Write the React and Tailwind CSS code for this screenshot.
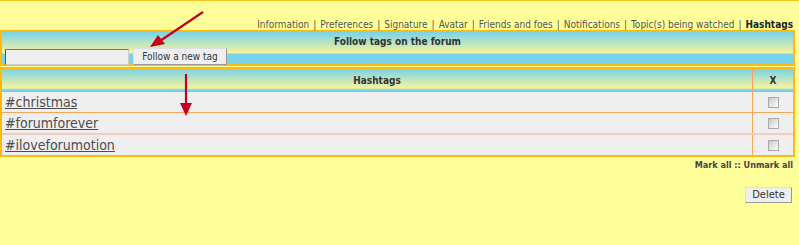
import React from 'react';

const navLinks = [
  'Information',
  'Preferences',
  'Signature',
  'Avatar',
  'Friends and foes',
  'Notifications',
  'Topic(s) being watched',
];

const tags = ['#christmas', '#forumforever', '#iloveforumotion'];

const font = { fontFamily: '"DejaVu Sans Condensed", "DejaVu Sans", Verdana, sans-serif' };

const Box = () => (
  <input
    type="checkbox"
    className="appearance-none block w-[11px] h-[11px] border border-[#a9a9a9] bg-[linear-gradient(135deg,#c8c8c8,#ffffff)]"
  />
);

const App = () => {
  return (
    <div className="relative w-[799px] h-[245px] bg-[#ffff99] border-t border-[#ffc21a] overflow-hidden" style={font}>
      {/* tab links */}
      <div className="flex justify-end items-start h-[29px] pt-[18px] pr-[6px] text-[10px] leading-[12px] text-[#555]">
        {navLinks.map((l) => (
          <span key={l}>
            {l}
            <span className="mx-[4px]">|</span>
          </span>
        ))}
        <span className="font-bold text-[#222]">Hashtags</span>
      </div>

      {/* follow panel */}
      <div className="w-[795px] border-2 border-[#ffb90f] h-[36px] bg-[linear-gradient(to_bottom,#78d3ea_0px,#f7f39b_21px,#78d3ea_22px)]">
        <div className="text-center text-[10px] font-bold text-[#333] pt-[4px] leading-[12px]">
          Follow tags on the forum
        </div>
        <div className="flex items-center gap-[4px] pl-[3px]">
          <input
            type="text"
            className="w-[124px] h-[16px] bg-[#eeeeee] border border-t-[#777] border-l-[#555] border-r-[#ccc] border-b-[#ccc] outline-none"
          />
          <button className="h-[17px] w-[94px] bg-[#efefef] border border-t-[#e0e0e0] border-l-[#e0e0e0] border-r-[#999] border-b-[#999] text-[10px] leading-[14px] text-[#333]">
            Follow a new tag
          </button>
        </div>
      </div>

      {/* hashtags table */}
      <div className="w-[795px] mt-[1px] border-2 border-[#ffb90f]">
        <div className="flex h-[23px] bg-[linear-gradient(to_bottom,#78d3ea_0px,#f7f39b_19px,#78d3ea_21px)] border-b border-[#f6a55a]">
          <div className="flex-1 flex items-center justify-center text-[10px] font-bold text-[#333] border-r border-[#f6a55a]">
            Hashtags
          </div>
          <div className="w-[40px] flex items-center justify-center text-[10px] font-bold text-[#333]">X</div>
        </div>
        {tags.map((t, i) => (
          <div
            key={t}
            className={
              'flex bg-[#efefef] ' +
              (i === 0
                ? 'h-[21px] border-b border-[#f6a55a]'
                : i === 1
                ? 'h-[22px] border-b-2 border-[#f5cdb6]'
                : 'h-[20px]')
            }
          >
            <div className="flex-1 flex items-center pl-[3px] border-r border-[#f6a55a]">
              <a href="#" className="text-[14px] leading-[16px] text-[#4d4d4d] underline">
                {t}
              </a>
            </div>
            <div className="w-[40px] flex items-center justify-center">
              <Box />
            </div>
          </div>
        ))}
      </div>

      <div className="w-[795px] flex justify-end pr-[2px] pt-[2px] text-[9px] font-bold text-[#444]">
        Mark all :: Unmark all
      </div>

      <div className="w-[795px] flex justify-end pr-[3px] pt-[14px]">
        <button className="h-[16px] w-[47px] bg-[#efefef] border border-t-[#e0e0e0] border-l-[#e0e0e0] border-r-[#999] border-b-[#999] text-[11px] leading-[14px] text-[#333]">
          Delete
        </button>
      </div>

      {/* red annotation arrows */}
      <svg className="absolute left-0 top-0 pointer-events-none" width="799" height="245">
        <line x1="203" y1="11" x2="160" y2="40" stroke="#c4001c" strokeWidth="2.2" />
        <polygon points="150,46 158,34 165,43" fill="#c4001c" />
        <line x1="186" y1="73" x2="186" y2="104" stroke="#c4001c" strokeWidth="2.2" />
        <polygon points="180,102 192,102 186,115" fill="#c4001c" />
      </svg>
    </div>
  );
};

export default App;
